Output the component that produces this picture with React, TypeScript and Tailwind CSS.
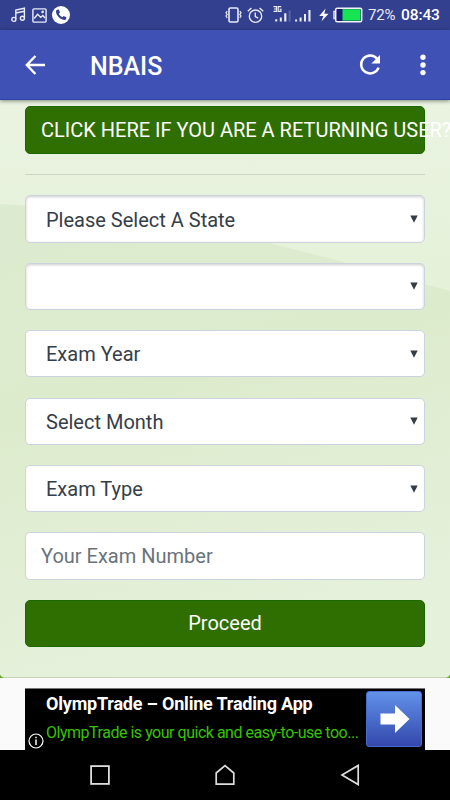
import React from "react";

const selects = [
  { label: "Please Select A State", inset: true },
  { label: "", inset: true },
  { label: "Exam Year", inset: false },
  { label: "Select Month", inset: false },
  { label: "Exam Type", inset: false },
];

function StatusBar() {
  return (
    <div className="flex h-[30px] shrink-0 items-center bg-[#33408f] pr-[10px] pl-[11px] text-[#e9ebf6]">
      <svg width="15" height="16" viewBox="0 0 15 16" fill="none" stroke="currentColor" strokeWidth="1.4">
        <circle cx="2.8" cy="12.4" r="2" />
        <circle cx="11.4" cy="11.2" r="2" />
        <path d="M4.8 12.4V3L13.4 1.2V11.2M4.8 6L13.4 4.2" />
      </svg>
      <svg className="ml-[6px]" width="15" height="15" viewBox="0 0 15 15" fill="none" stroke="currentColor" strokeWidth="1.4">
        <rect x="0.9" y="0.9" width="13.2" height="13.2" rx="1.2" />
        <path d="M2.2 10.5L5.6 6.3L8.8 9.4L10.8 7.6L13 10" />
        <circle cx="10.6" cy="3.9" r="0.6" fill="currentColor" />
      </svg>
      <svg className="ml-[5px]" width="18" height="18" viewBox="0 0 18 18">
        <circle cx="9" cy="9" r="9" fill="#fff" />
        <path
          d="M5.1 3.7L6.9 3.5L8 6.4L6.8 7.6C7.4 9.2 8.8 10.6 10.4 11.2L11.6 10L14.4 11.2L14.1 13.2C13.5 14 12 14.2 10.5 13.6C7.3 12.5 4.5 9.3 4 6C3.9 4.9 4.4 4.1 5.1 3.7Z"
          fill="#33408f"
        />
      </svg>

      <svg className="ml-auto" width="17" height="16" viewBox="0 0 17 16" fill="none" stroke="currentColor" strokeWidth="1.2">
        <rect x="4" y="1" width="9" height="14" rx="1.4" strokeWidth="1.6" />
        <path d="M2.2 4.2L1 5.8L2.2 7.4L1 9L2.2 10.8M14.8 4.2L16 5.8L14.8 7.4L16 9L14.8 10.8" />
      </svg>
      <svg className="ml-[5px]" width="17" height="17" viewBox="0 0 17 17" fill="none" stroke="currentColor" strokeWidth="1.4">
        <circle cx="8.5" cy="9.2" r="6.2" />
        <path d="M8.3 5.5V9.5L11.2 11.2M0.8 4.3L4.4 1.1M16.2 4.3L12.6 1.1" />
      </svg>
      <svg className="ml-[9px]" width="19" height="20" viewBox="0 0 19 20" fill="currentColor">
        <path
          d="M0.5 1.6H3.6V6.4H0.5M1 4H3.6M8.2 1.6H5.2V6.4H8V4.2H6.6"
          fill="none"
          stroke="currentColor"
          strokeWidth="1.1"
        />
        <path d="M2.2 14.2H4.2V16.6H2.2ZM6.8 12.4H8.8V16.6H6.8ZM11.2 8.2H13.4V16.6H11.2Z" />
        <path d="M15.6 5.4H17.6V16.6H15.6Z" fill="#5964a5" />
      </svg>
      <svg className="ml-[3px]" width="17" height="20" viewBox="0 0 17 20" fill="currentColor">
        <path d="M0.1 14.4H2.1V16.6H0.1ZM4.6 12.4H6.6V16.6H4.6ZM9 9H11V16.6H9ZM13.4 5H15.5V16.6H13.4Z" />
      </svg>
      <svg className="ml-[6px]" width="12" height="14" viewBox="0 0 12 14" fill="#fff">
        <path d="M7.6 0.5L1.2 8H5.4L3.4 13.5L10.5 5.8H6.3Z" />
      </svg>
      <svg className="ml-[3px]" width="30" height="16" viewBox="0 0 30 16">
        <path d="M2 4.4H1V11.6H2" fill="none" stroke="#e9ebf6" strokeWidth="1.4" />
        <rect x="2.7" y="1.2" width="26" height="13.6" rx="1.5" fill="#1b1d75" stroke="#f1f2f8" strokeWidth="1.5" />
        <rect x="9.5" y="2.2" width="18" height="11.4" fill="#17e453" />
      </svg>
      <span className="ml-[5px] w-[28px] pt-px text-[15px] tracking-[-0.2px] whitespace-nowrap">72%</span>
      <span className="ml-[5px] w-[39px] pt-px text-[15.5px] font-medium tracking-[-0.1px] whitespace-nowrap text-white">
        08:43
      </span>
    </div>
  );
}

function AppBar() {
  return (
    <header className="relative z-10 flex h-[70px] shrink-0 items-center border-b border-[#2c44a9] bg-[#3f51b5] pr-[24.5px] pl-[25px] text-white shadow-[0_1px_4px_rgba(0,0,0,0.45)]">
      <svg width="20" height="20" viewBox="0 0 20 20" fill="none" stroke="currentColor" strokeWidth="2.4">
        <path d="M10.4 1L1.8 10L10.4 19M1.8 10H20" />
      </svg>
      <h1 className="ml-[45px] pt-[4px] text-[25px] leading-none font-medium">NBAIS</h1>
      <svg className="ml-auto" width="22" height="22" viewBox="0 0 22 22">
        <path d="M18.2 4.8A9 9 0 1 0 19.6 13.6" fill="none" stroke="currentColor" strokeWidth="2.5" />
        <path d="M21 1V9.4H12.4Z" fill="currentColor" />
      </svg>
      <svg className="ml-[39px]" width="6" height="22" viewBox="0 0 6 22" fill="currentColor">
        <circle cx="3" cy="3.3" r="2.7" />
        <circle cx="3" cy="11" r="2.7" />
        <circle cx="3" cy="18.6" r="2.7" />
      </svg>
    </header>
  );
}

function SelectField({ label, inset }: { label: string; inset: boolean }) {
  return (
    <div
      className={`flex h-[47.4px] items-center justify-between rounded-[5px] border border-[#ccd2df] bg-white pr-[6px] pl-[20px] text-[20px] text-[#343e48] ${inset ? "shadow-[inset_0_1px_3px_rgba(0,0,0,0.2)]" : ""}`}
    >
      <span className="pt-[1.4px]">{label}</span>
      <svg width="8" height="8" viewBox="0 0 8 8" fill="#343c44">
        <path d="M0.3 0.5H7.7L4 7.8Z" />
      </svg>
    </div>
  );
}

function AdBanner() {
  return (
    <div className="mx-[25px] flex h-[62.5px] border-t border-[#777] bg-black">
      <div className="flex w-[21px] items-end pb-[1px] pl-[3px]">
        <svg width="16" height="16" viewBox="0 0 16 16" fill="none" stroke="#fff" strokeWidth="1.2">
          <circle cx="8" cy="8" r="7" />
          <path d="M8 6.5V12M8 3.8V5.2" strokeWidth="1.5" />
        </svg>
      </div>
      <div className="w-[320px] whitespace-nowrap">
        <p className="pt-[4px] text-[18px] leading-[22px] font-bold tracking-[-0.2px] text-white">
          OlympTrade – Online Trading App
        </p>
        <p className="mt-[6px] text-[16px] leading-[24px] tracking-[-0.48px] text-[#37c300]">
          OlympTrade is your quick and easy-to-use too...
        </p>
      </div>
      <div className="mt-[2px] flex h-[56px] w-[56px] shrink-0 items-center justify-center rounded-[3px] border border-[#456bd0] bg-linear-to-b from-[#6292e8] to-[#3547ad]">
        <svg className="ml-[2px]" width="30" height="30" viewBox="0 0 30 30" fill="#fff">
          <path d="M0.5 9.5H15V1L29.5 15L15 29V20.5H0.5Z" />
        </svg>
      </div>
    </div>
  );
}

function NavBar() {
  return (
    <nav className="flex h-[50px] shrink-0 items-center justify-between bg-black px-[90px]">
      <svg width="20" height="20" viewBox="0 0 20 20" fill="none" stroke="#ddd" strokeWidth="1.8">
        <rect x="1.1" y="1.1" width="17.8" height="17.8" />
      </svg>
      <svg width="20" height="22" viewBox="0 0 20 22" fill="none" stroke="#ddd" strokeWidth="1.7">
        <path d="M1.2 20.2V9L10 1.6L18.8 9V20.2Z" />
      </svg>
      <svg width="20" height="22" viewBox="0 0 20 22" fill="none" stroke="#ddd" strokeWidth="1.7">
        <path d="M18.2 1.4V20.6L2 11Z" />
      </svg>
    </nav>
  );
}

export default function App() {
  return (
    <div className="flex h-[800px] w-[450px] flex-col overflow-hidden bg-[#fafafa] font-[Roboto,sans-serif]">
      <StatusBar />
      <AppBar />
      <main className="h-[577.5px] shrink-0 bg-[#68a924]">
        <div className="relative h-full overflow-hidden rounded-b-[5px] border-b border-[#c4d4b5] bg-[#e8f2df]">
          {/* soft hills behind the form */}
          <svg className="absolute inset-0" width="450" height="577" viewBox="0 0 450 577" preserveAspectRatio="none">
            <defs>
              <linearGradient id="sky" x1="0" y1="0" x2="0" y2="1">
                <stop offset="0" stopColor="#e9f3e0" />
                <stop offset="0.35" stopColor="#e6f1d9" />
                <stop offset="1" stopColor="#e3efd7" />
              </linearGradient>
              <linearGradient id="hill" x1="0" y1="0" x2="0.25" y2="1">
                <stop offset="0" stopColor="#dcebcf" />
                <stop offset="0.45" stopColor="#ddebcd" />
                <stop offset="1" stopColor="#e5f1db" />
              </linearGradient>
            </defs>
            <rect width="450" height="577" fill="url(#sky)" />
            <path d="M0 104C70 108 170 122 250 139C310 152 390 175 450 191V577H0Z" fill="url(#hill)" />
          </svg>
          <div className="relative px-[25px] pt-[6.2px]">
            <button className="flex h-[47.4px] w-full items-center rounded-[5px] border border-[#1c6800] bg-[#2f6e00] pl-[15px] text-[20px] whitespace-nowrap text-white">
              CLICK HERE IF YOU ARE A RETURNING USER?
            </button>
            <hr className="mt-[20.2px] border-[#cbd5c2]" />
            <form className="mt-[20.4px] flex flex-col gap-[20.07px]">
              {selects.map((s, i) => (
                <SelectField key={i} label={s.label} inset={s.inset} />
              ))}
              <input
                type="text"
                placeholder="Your Exam Number"
                className="h-[47.4px] w-full rounded-[5px] border border-[#ccd2df] bg-white px-[15px] text-[20px] placeholder:text-[#69737c]"
              />
              <button
                type="button"
                className="h-[47.4px] w-full rounded-[5px] border border-[#1c6800] bg-[#2f6e00] pb-px text-[20px] text-white"
              >
                Proceed
              </button>
            </form>
          </div>
        </div>
      </main>
      <div className="flex h-[72.5px] shrink-0 flex-col justify-end">
        <AdBanner />
      </div>
      <NavBar />
    </div>
  );
}
